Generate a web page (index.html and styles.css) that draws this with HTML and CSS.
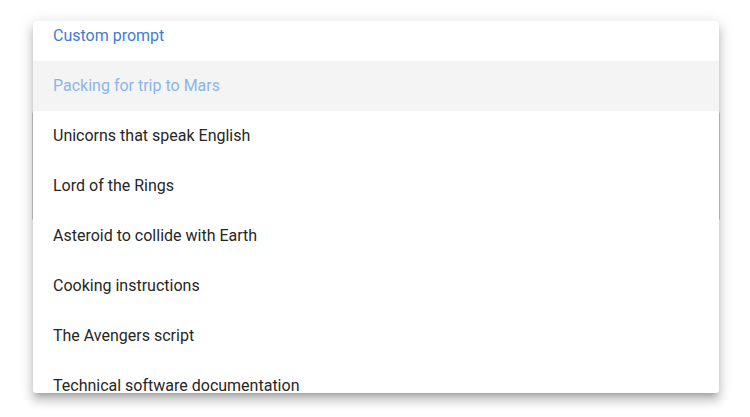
FILE: index.html
```html
<!DOCTYPE html>
<html lang="en">
<head>
    <meta charset="UTF-8">
    <meta name="viewport" content="width=device-width, initial-scale=1.0">
    <title>Prompt picker</title>
    <link rel="stylesheet" href="styles.css">
</head>
<body>
    <div class="page">
        <div class="field"></div>

        <div class="menu">
            <ul class="options">
                <li class="custom">Custom prompt</li>
                <li class="active">Packing for trip to Mars</li>
                <li>Unicorns that speak English</li>
                <li>Lord of the Rings</li>
                <li>Asteroid to collide with Earth</li>
                <li>Cooking instructions</li>
                <li>The Avengers script</li>
                <li>Technical software documentation</li>
            </ul>
        </div>
    </div>
</body>
</html>
```

FILE: styles.css
```css
body {
    margin: 0;
    background-color: #fff;
    font-family: Roboto, "Noto Sans", sans-serif;
}

.page {
    position: relative;
    width: 750px;
    height: 417px;
    overflow: hidden;
}

.field {
    margin: 110px 0 0 32px;
    width: 686px;
    height: 110px;
    border: 1px solid #cfcfcf;
    border-radius: 4px;
}

.menu {
    position: absolute;
    top: 21px;
    left: 33px;
    width: 686px;
    height: 372px;
    overflow: hidden;
    background-color: #fff;
    border-radius: 3px;
    box-shadow: 0 5px 5px -3px rgba(0, 0, 0, 0.2),
                0 8px 10px 1px rgba(0, 0, 0, 0.14),
                0 3px 14px 2px rgba(0, 0, 0, 0.12);
}

.options {
    list-style: none;
    margin: -10px 0 0 0;
    padding: 0;
}

.options li {
    height: 50px;
    line-height: 49px;
    padding: 0 20px;
    font-size: 16px;
    color: #262626;
    white-space: nowrap;
}

.options li.custom {
    color: #3f7bd9;
}

.options li.active {
    background-color: #f4f4f4;
    color: #8ab5ee;
}
```
